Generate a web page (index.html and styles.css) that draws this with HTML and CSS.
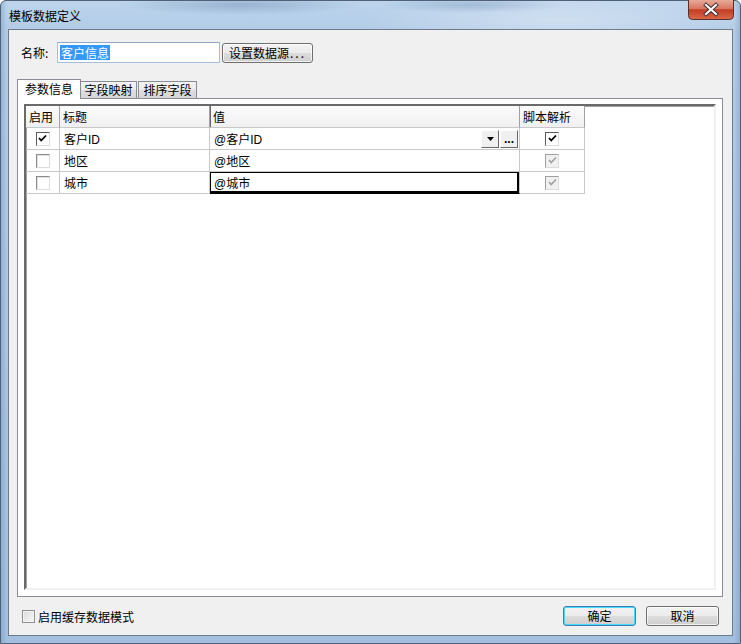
FILE: index.html
```html
<!DOCTYPE html>
<html>

<head>
	<meta charset="UTF-8">
	<link rel="stylesheet" href="styles.css">
</head>

<body>
	<div class="window">
		<!-- 标题栏 -->
		<div class="titlebar">
			<div class="title">模板数据定义</div>
			<div class="close-btn">
				<svg width="46" height="20" viewBox="0 0 46 20">
					<defs>
						<linearGradient id="redg" x1="0" y1="0" x2="0" y2="1">
							<stop offset="0" stop-color="#e9a99a" />
							<stop offset="0.45" stop-color="#d8755f" />
							<stop offset="0.5" stop-color="#c43d24" />
							<stop offset="1" stop-color="#d9694a" />
						</linearGradient>
					</defs>
					<path d="M0.5 0 V15.5 Q0.5 19.5 4.5 19.5 H41.5 Q45.5 19.5 45.5 15.5 V0" fill="url(#redg)" stroke="#5b2e2a" />
					<path d="M18 5 L28 14 M28 5 L18 14" stroke="#3a2a2a" stroke-width="4" stroke-linecap="square" />
					<path d="M18 5 L28 14 M28 5 L18 14" stroke="#ffffff" stroke-width="2.2" stroke-linecap="square" />
				</svg>
			</div>
		</div>

		<div class="client">
			<div class="name-row">
				<span class="name-label">名称:</span>
				<div class="text-input"><span class="sel">客户信息</span></div>
				<button class="btn btn-source">设置数据源<span class="ellipsis">...</span></button>
			</div>

			<!-- 选项卡 -->
			<div class="tabs">
				<div class="tab active">参数信息</div>
				<div class="tab">字段映射</div>
				<div class="tab tab-last">排序字段</div>
			</div>

			<div class="tab-panel">
				<div class="grid">
					<div class="grid-row grid-head">
						<div class="cell">启用</div>
						<div class="cell">标题</div>
						<div class="cell cell-focus">值</div>
						<div class="cell">脚本解析</div>
					</div>
					<div class="grid-row">
						<div class="cell cell-center"><span class="cb checked"><svg width="9" height="9" viewBox="0 0 9 9"><polyline points="1,4 3.2,6.5 8,1.5" fill="none" stroke="#000" stroke-width="1.8" /></svg></span></div>
						<div class="cell">客户ID</div>
						<div class="cell cell-value">
							<span>@客户ID</span>
							<span class="cell-btns">
								<span class="mini-btn"><svg width="7" height="4" viewBox="0 0 7 4"><polygon points="0,0 7,0 3.5,4" fill="#000" /></svg></span>
								<span class="mini-btn dots">...</span>
							</span>
						</div>
						<div class="cell cell-center"><span class="cb checked"><svg width="9" height="9" viewBox="0 0 9 9"><polyline points="1,4 3.2,6.5 8,1.5" fill="none" stroke="#000" stroke-width="1.8" /></svg></span></div>
					</div>
					<div class="grid-row">
						<div class="cell cell-center"><span class="cb"></span></div>
						<div class="cell">地区</div>
						<div class="cell">@地区</div>
						<div class="cell cell-center"><span class="cb disabled"><svg width="9" height="9" viewBox="0 0 9 9"><polyline points="1,4 3.2,6.5 8,1.5" fill="none" stroke="#a0a0a0" stroke-width="1.6" /></svg></span></div>
					</div>
					<div class="grid-row">
						<div class="cell cell-center"><span class="cb"></span></div>
						<div class="cell">城市</div>
						<div class="cell cell-edit">@城市</div>
						<div class="cell cell-center"><span class="cb disabled"><svg width="9" height="9" viewBox="0 0 9 9"><polyline points="1,4 3.2,6.5 8,1.5" fill="none" stroke="#a0a0a0" stroke-width="1.6" /></svg></span></div>
					</div>
				</div>
			</div>

			<!-- 底部 -->
			<div class="footer">
				<label class="cache-opt"><span class="cb-win7"></span>启用缓存数据模式</label>
				<div class="footer-btns">
					<button class="btn btn-default">确定</button>
					<button class="btn">取消</button>
				</div>
			</div>
		</div>
	</div>
</body>

</html>
```

FILE: styles.css
```css
html,
body {
	margin: 0;
	padding: 0;
	width: 100%;
	height: 100%;
	overflow: hidden;
	background: #ffffff;
}

body {
	font-family: "Liberation Sans", "Noto Sans CJK SC", sans-serif;
	font-size: 12px;
	color: #000;
}

/* 窗口外框 */
.window {
	width: 741px;
	height: 644px;
	box-sizing: border-box;
	display: flex;
	flex-direction: column;
	padding: 0 7px 7px 7px;
	border: 1px solid #4f6077;
	border-radius: 6px 6px 0 0;
	background:
		radial-gradient(ellipse 120px 10px at 240px 4px, rgba(90, 120, 160, 0.35), transparent),
		radial-gradient(ellipse 90px 8px at 470px 4px, rgba(90, 120, 160, 0.3), transparent),
		radial-gradient(ellipse 200px 30px at 560px 20px, rgba(255, 255, 255, 0.35), transparent),
		linear-gradient(90deg, rgba(70, 110, 160, 0.25) 0, transparent 6px, transparent calc(100% - 6px), rgba(70, 110, 160, 0.25) 100%),
		linear-gradient(180deg, #bcd4ec 0, #b3cce7 28px, #a3c0df 100%);
}

.titlebar {
	height: 28px;
	display: flex;
	justify-content: space-between;
	align-items: flex-start;
	margin: 0 -1px 0 -6px;
}

.title {
	padding: 7px 0 0 7px;
	font-family: "Noto Sans CJK SC", sans-serif;
	font-size: 12px;
	line-height: 16px;
	color: #000;
}

.close-btn {
	width: 46px;
	height: 20px;
	margin-top: -1px;
}

.close-btn svg {
	display: block;
}

/* 客户区 */
.client {
	flex: 1;
	display: flex;
	flex-direction: column;
	background: #f0f0f0;
	border: 1px solid #6d7b8c;
}

.name-row {
	display: flex;
	align-items: center;
	padding: 12px 0 0 12px;
	height: 21px;
}

.name-label {
	width: 36px;
	font-family: "Noto Sans CJK SC", sans-serif;
}

.text-input {
	width: 163px;
	height: 21px;
	box-sizing: border-box;
	border: 1px solid #a4bfdc;
	border-top-color: #8fa9c8;
	background: #fff;
	padding: 2px 0 0 2px;
	display: flex;
	align-items: flex-start;
}

.sel {
	background: #3399ff;
	color: #fff;
	font-family: "Noto Sans CJK SC", sans-serif;
	line-height: 15px;
	padding: 0 1px;
}

.btn {
	font-family: "Noto Sans CJK SC", sans-serif;
	font-size: 12px;
	color: #000;
	height: 20px;
	padding: 0;
	box-sizing: border-box;
	border: 1px solid #707070;
	border-radius: 3px;
	background: linear-gradient(180deg, #f2f2f2 0, #ebebeb 50%, #dddddd 50%, #cfcfcf 100%);
	box-shadow: inset 0 0 0 1px rgba(255, 255, 255, 0.7);
	line-height: 16px;
}

.btn-source {
	width: 91px;
	margin-left: 2px;
}

.ellipsis {
	letter-spacing: 2px;
	margin-left: 1px;
}

/* 选项卡 */
.tabs {
	display: flex;
	align-items: flex-end;
	margin: 16px 0 0 8px;
	height: 19px;
	position: relative;
	z-index: 1;
}

.tab {
	font-family: "Noto Sans CJK SC", sans-serif;
	height: 17px;
	box-sizing: border-box;
	padding: 0 3px;
	border: 1px solid #898c95;
	border-bottom: none;
	background: linear-gradient(180deg, #f3f3f3 0, #ebebeb 50%, #dedede 50%, #d6d6d6 100%);
	line-height: 16px;
	text-align: center;
	width: 57px;
	margin-left: -1px;
}

.tab-last {
	width: 59px;
	margin-left: 1px;
}

.tab.active {
	width: 64px;
	height: 20px;
	margin-left: 0;
	margin-bottom: -1px;
	background: #ffffff;
	line-height: 18px;
}

.tab-panel {
	margin: 0 9px 0 8px;
	flex: 1;
	border: 1px solid #898c95;
	background: #ffffff;
	padding: 5px 6px 6px 6px;
	display: flex;
}

/* 表格 */
.grid {
	flex: 1;
	border-style: solid;
	border-width: 2px;
	border-color: #6a6a6a #f0f0f0 #f0f0f0 #6a6a6a;
	box-shadow: inset 1px 1px 0 #a0a0a0;
	background: #fff;
}

.grid-row {
	display: grid;
	grid-template-columns: 34px 150px 310px 65px;
	height: 22px;
}

.cell {
	border-right: 1px solid #c8c8c8;
	border-bottom: 1px solid #c8c8c8;
	padding-left: 4px;
	display: flex;
	align-items: center;
	font-family: "Liberation Sans", "Noto Sans CJK SC", sans-serif;
	white-space: nowrap;
	overflow: hidden;
	box-sizing: border-box;
}

.grid-head .cell {
	background: linear-gradient(180deg, #fbfbfb 0, #f0f0f0 100%);
	border-right-color: #a0a0a0;
	padding-left: 3px;
	font-family: "Noto Sans CJK SC", sans-serif;
}

.grid-head .cell-focus {
	box-shadow: inset 1px 0 0 #6a6a6a;
}

.cell-center {
	justify-content: center;
	padding-left: 0;
}

.cell-value {
	justify-content: space-between;
	padding-right: 1px;
}

.cell-btns {
	display: flex;
	gap: 1px;
}

.mini-btn {
	width: 18px;
	height: 18px;
	box-sizing: border-box;
	border: 1px solid;
	border-color: #ffffff #696969 #696969 #ffffff;
	background: #f0f0f0;
	display: flex;
	align-items: center;
	justify-content: center;
}

.dots {
	font-size: 12px;
	font-weight: bold;
	line-height: 12px;
	align-items: flex-end;
	padding-bottom: 2px;
	letter-spacing: 0;
}

.cell-edit {
	box-shadow: inset 0 0 0 1px #000, inset -1px -1px 0 1px #000;
	border-bottom-color: #000;
}

/* 经典复选框 */
.cb {
	width: 14px;
	height: 14px;
	box-sizing: border-box;
	border: 1px solid;
	border-color: #8a8a8a #dcdcdc #dcdcdc #8a8a8a;
	box-shadow: inset 1px 1px 0 #e3e3e3;
	background: #fff;
	display: flex;
	align-items: center;
	justify-content: center;
}

.cb.checked {
	border-color: #5a5a5a #dcdcdc #dcdcdc #5a5a5a;
	box-shadow: none;
}

.cb.disabled {
	background: #f0f0f0;
	border-color: #a0a0a0 #dcdcdc #dcdcdc #a0a0a0;
	box-shadow: none;
}

/* 底部区域 */
.footer {
	height: 38px;
	display: flex;
	align-items: center;
	justify-content: space-between;
	padding: 0 13px 0 13px;
}

.cache-opt {
	display: flex;
	align-items: center;
	gap: 3px;
	font-family: "Noto Sans CJK SC", sans-serif;
}

.cb-win7 {
	width: 13px;
	height: 13px;
	box-sizing: border-box;
	border: 1px solid #8e8f8f;
	background: linear-gradient(135deg, #dcdcdc, #f6f6f6);
	box-shadow: inset 0 0 0 1px #f4f4f4;
}

.footer-btns {
	display: flex;
	gap: 10px;
}

.footer-btns .btn {
	width: 73px;
}

.btn-default {
	border-color: #3c7fb1;
	box-shadow: inset 0 0 0 1px #48d8fb;
}
```
